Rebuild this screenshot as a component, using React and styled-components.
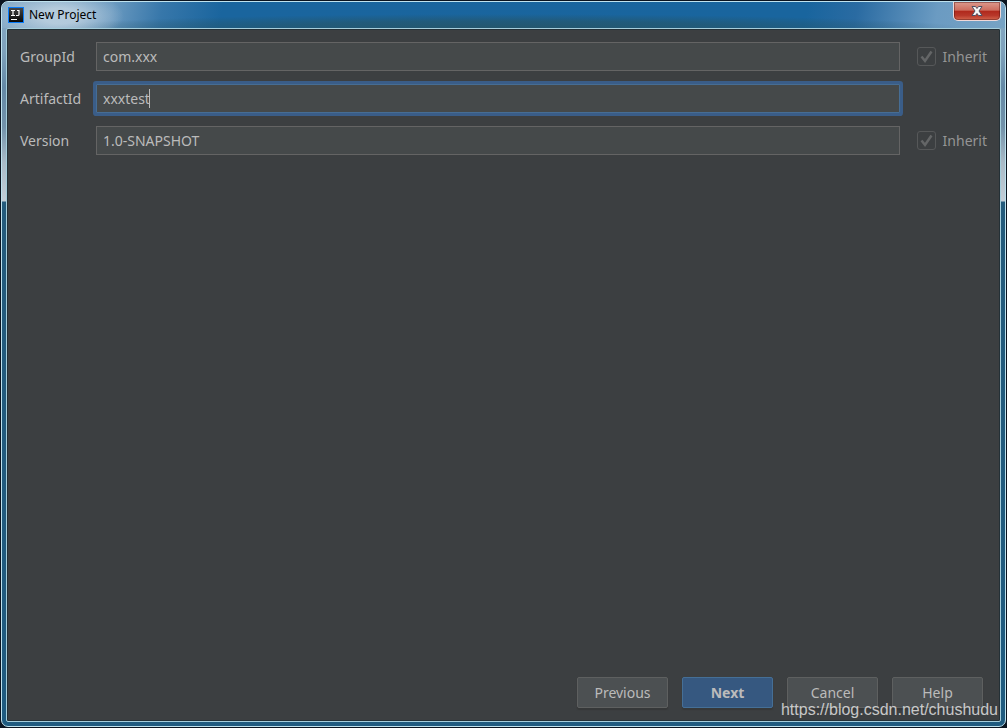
import React, { useCallback, useState } from "react";
import styled, { createGlobalStyle, css } from "styled-components";

const GlobalStyle = createGlobalStyle`
  * {
    box-sizing: border-box;
  }

  body {
    margin: 0;
    background: #0b1420;
    font-family: "Noto Sans", "Open Sans", sans-serif;
    font-size: 14px;
    color: #bbbbbb;
  }
`;

const Desktop = styled.div`
  display: flex;
  min-height: 100vh;
  padding: 1px;
`;

const Window = styled.div`
  position: relative;
  flex: 1;
  display: flex;
  flex-direction: column;
  padding: 0 4px 4px;
  border: 1px solid #bfe2ee;
  border-radius: 7px;
  background: linear-gradient(
    180deg,
    #86aac6 0px,
    #7ea1bb 50px,
    #6489a6 85px,
    #7292aa 125px,
    #a9bac7 160px,
    #c3ced7 199px,
    #245b7c 200px,
    #1f5b80 100%
  );
`;

const TitleBar = styled.header`
  display: flex;
  align-items: flex-start;
  height: 26px;
  margin: 0 -4px;
  padding: 0 4px 0 6px;
  border-radius: 6px 6px 0 0;
  background:
    radial-gradient(ellipse 64px 26px at 58px 14px, rgba(200, 216, 228, 0.75) 30%, rgba(200, 216, 228, 0) 100%),
    radial-gradient(ellipse 46% 14px at 50% 26px, rgba(38, 84, 100, 0.85) 0%, rgba(38, 84, 100, 0.6) 50%, rgba(38, 84, 100, 0) 100%),
    linear-gradient(100deg, #88acc8 0%, #6b9ac0 11%, #3777aa 16%, #1a659e 22%, #19659e 80%, #2a6ba2 85%, #6b9bc2 93%, #77a3c4 100%);
`;

const Title = styled.h1`
  flex: 1;
  margin: 0 0 0 5px;
  font-size: 12px;
  font-weight: 400;
  line-height: 25px;
  color: #000;
`;

const LogoSvg = styled.svg`
  display: block;
  margin-top: 5px;
`;

const CloseButton = styled.button`
  display: flex;
  align-items: center;
  justify-content: center;
  width: 48px;
  height: 19px;
  padding: 0 0 1px;
  border: 1px solid #f0d8d8;
  border-top: 0;
  border-radius: 0 0 5px 5px;
  background: linear-gradient(180deg, #dc9a8e 0%, #cd6d5e 46%, #b0281c 50%, #b8382a 75%, #d4674e 100%);
  box-shadow: inset 0 0 0 1px rgba(80, 20, 20, 0.45);
`;

const Content = styled.main`
  flex: 1;
  display: flex;
  flex-direction: column;
  justify-content: space-between;
  padding: 13px;
  border: 1px solid #a5cddb;
  border-radius: 2px;
  background: #3c3f41;
  box-shadow: inset 0 0 0 1px #243036;
`;

const Form = styled.form`
  display: grid;
  gap: 13px;
`;

const Row = styled.div`
  display: grid;
  grid-template-columns: 76px 1fr 87px;
  align-items: center;
  height: 29px;
`;

const Label = styled.label`
  line-height: 20px;
`;

const InputBox = styled.div`
  position: relative;
`;

const Input = styled.input`
  display: block;
  width: 100%;
  height: 29px;
  padding: 0 6px;
  border: 1px solid #646464;
  border-radius: 0;
  outline: none;
  background: #45494a;
  color: #bbbbbb;
  font: inherit;

  ${(props) =>
    props.$active &&
    css`
      border-color: #466d94;
      box-shadow: 0 0 0 3px #3a5d88;
      border-radius: 1px;
      caret-color: transparent;
    `}
`;

const Caret = styled.span`
  position: absolute;
  top: 5px;
  left: 53px;
  width: 1px;
  height: 19px;
  background: #bbbbbb;
`;

const InheritLabel = styled.label`
  display: flex;
  align-items: center;
  justify-content: flex-end;
  gap: 7px;
  color: #959595;
`;

const CheckWrap = styled.span`
  display: grid;
  width: 19px;
  height: 19px;

  & > * {
    grid-area: 1 / 1;
  }
`;

const Checkbox = styled.input`
  appearance: none;
  width: 19px;
  height: 19px;
  margin: 0;
  border: 1px solid #565859;
  border-radius: 3px;
`;

const Footer = styled.footer`
  display: flex;
  justify-content: flex-end;
  gap: 14px;
  padding-right: 4px;
`;

const Button = styled.button`
  width: 91px;
  height: 31px;
  padding: 0;
  border: 1px solid ${(props) => (props.$primary ? "#456f96" : "#5e6060")};
  border-radius: 2px;
  background: ${(props) => (props.$primary ? "#365880" : "#4c5052")};
  box-shadow: 0 2px 1px #363839;
  color: #bbbbbb;
  font: inherit;
  font-weight: ${(props) => (props.$primary ? 700 : 400)};
`;

const Watermark = styled.div`
  position: absolute;
  right: 7px;
  bottom: 6px;
  font-family: "Liberation Sans", Arial, sans-serif;
  font-size: 16px;
  line-height: 20px;
  color: rgba(225, 225, 225, 0.85);
  pointer-events: none;
`;

const Logo = () => (
  <LogoSvg width="16" height="16" viewBox="0 0 16 16" aria-hidden="true">
    <defs>
      <linearGradient id="logoFill" x1="0" y1="0" x2="0" y2="1">
        <stop offset="0" stopColor="#454545" />
        <stop offset="1" stopColor="#080808" />
      </linearGradient>
    </defs>
    <rect width="16" height="16" fill="#087cfa" />
    <rect x="1" y="1" width="14" height="14" fill="url(#logoFill)" />
    <path
      d="M3 3.5h4M5 3v6M3 8.5h4M9 3.5h2M11 3v4.5q0 1-1 1H8"
      fill="none"
      stroke="#fff"
      strokeWidth="1.2"
    />
    <rect x="3" y="12" width="6" height="1" fill="#fff" />
  </LogoSvg>
);

const CloseIcon = () => (
  <svg width="12" height="10" viewBox="0 0 12 10" aria-hidden="true">
    <path
      d="M1 .5h3.5L6 2.5 7.5.5H11L8 5l3 4.5H7.5L6 7.5 4.5 9.5H1L4 5z"
      fill="#f7f7f7"
      stroke="#4d4f62"
      strokeWidth="1"
      strokeLinejoin="round"
    />
  </svg>
);

const Inherit = ({ id }) => (
  <InheritLabel htmlFor={id}>
    <CheckWrap>
      <Checkbox id={id} type="checkbox" defaultChecked disabled />
      <svg width="19" height="19" viewBox="0 0 19 19" aria-hidden="true">
        <path d="M4.5 9.5l3.5 4.5 6.5-9.5" fill="none" stroke="#646667" strokeWidth="2.5" />
      </svg>
    </CheckWrap>
    Inherit
  </InheritLabel>
);

const Field = ({ id, label, value, onChange, active, inherit }) => (
  <Row>
    <Label htmlFor={id}>{label}</Label>
    <InputBox>
      <Input
        id={id}
        name={id}
        type="text"
        spellCheck={false}
        value={value}
        onChange={onChange}
        $active={active}
      />
      {active && <Caret />}
    </InputBox>
    {inherit && <Inherit id={`${id}Inherit`} />}
  </Row>
);

const App = () => {
  const [values, setValues] = useState({
    groupId: "com.xxx",
    artifactId: "xxxtest",
    version: "1.0-SNAPSHOT",
  });

  const changeHandler = useCallback((e) => {
    const { name, value } = e.target;

    setValues((prev) => ({ ...prev, [name]: value }));
  }, []);

  return (
    <Desktop>
      <GlobalStyle />
      <Window>
        <TitleBar>
          <Logo />
          <Title>New Project</Title>
          <CloseButton type="button" aria-label="Close">
            <CloseIcon />
          </CloseButton>
        </TitleBar>
        <Content>
          <Form>
            <Field id="groupId" label="GroupId" value={values.groupId} onChange={changeHandler} inherit />
            <Field id="artifactId" label="ArtifactId" value={values.artifactId} onChange={changeHandler} active />
            <Field id="version" label="Version" value={values.version} onChange={changeHandler} inherit />
          </Form>
          <Footer>
            <Button type="button">Previous</Button>
            <Button type="button" $primary>
              Next
            </Button>
            <Button type="button">Cancel</Button>
            <Button type="button">Help</Button>
          </Footer>
        </Content>
        <Watermark>https://blog.csdn.net/chushudu</Watermark>
      </Window>
    </Desktop>
  );
};

export default App;
